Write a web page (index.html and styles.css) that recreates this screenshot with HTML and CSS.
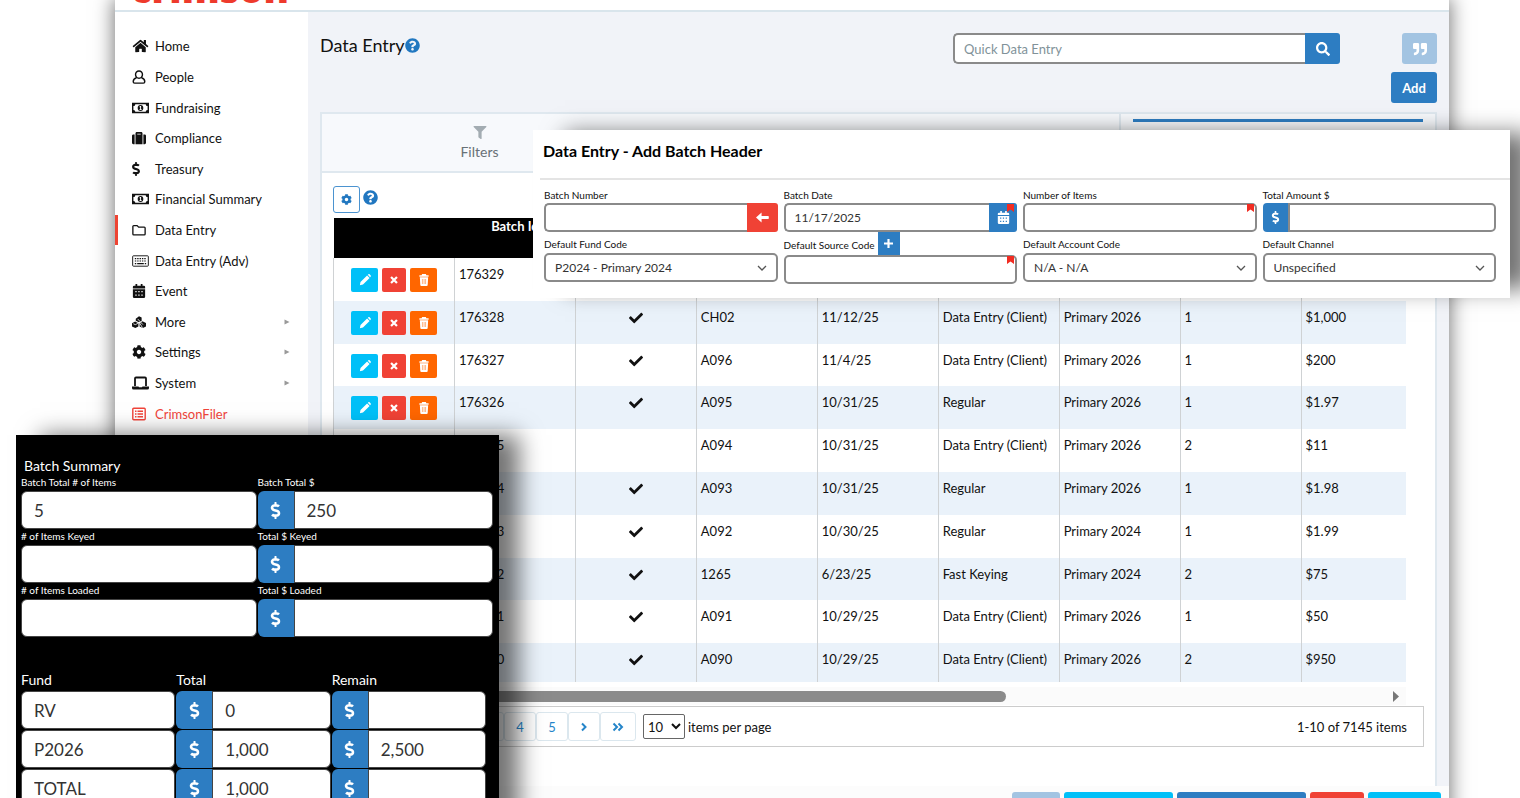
FILE: index.html
```
<!DOCTYPE html>
<html lang="en">
<head>
    <meta charset="UTF-8">
    <meta name="viewport" content="width=device-width, initial-scale=1.0">
    <title>Crimson - Data Entry</title>
    <link rel="stylesheet" href="styles.css">
</head>
<body>

    <!-- icons -->
    <svg class="sprite" aria-hidden="true">
        <symbol id="i-home" viewBox="0 0 576 512"><path d="M280.37 148.26L96 300.11V464a16 16 0 0 0 16 16l112.06-.29a16 16 0 0 0 15.92-16V368a16 16 0 0 1 16-16h64a16 16 0 0 1 16 16v95.64a16 16 0 0 0 16 16.05L464 480a16 16 0 0 0 16-16V300L295.67 148.26a12.19 12.19 0 0 0-15.3 0zM571.6 251.47L488 182.56V44.05a12 12 0 0 0-12-12h-56a12 12 0 0 0-12 12v72.61L318.47 43a48 48 0 0 0-61 0L4.34 251.47a12 12 0 0 0-1.6 16.9l25.5 31A12 12 0 0 0 45.15 301l235.22-193.74a12.19 12.19 0 0 1 15.3 0L530.9 301a12 12 0 0 0 16.9-1.6l25.5-31a12 12 0 0 0-1.7-16.93z"/></symbol>
        <symbol id="i-user" viewBox="0 0 14 15"><path fill="none" stroke="currentColor" stroke-width="1.5" d="M7 1a3.700 3.700 0 0 1 3.700 3.900A3.700 3.700 0 0 1 7 8.800a3.700 3.700 0 0 1-3.700-3.900A3.700 3.700 0 0 1 7 1zM4.300 8.300C2 9 .8 10.500.8 12.600c0 1.100.5 1.500 1.500 1.500h9.400c1 0 1.500-.4 1.500-1.500 0-2.100-1.200-3.600-3.500-4.300"/></symbol>
        <symbol id="i-money" viewBox="0 0 18 12"><path fill-rule="evenodd" d="M0 .5h18v11H0zM3.500 2a2 2 0 0 1-2 2v4a2 2 0 0 1 2 2h11a2 2 0 0 1 2-2V4a2 2 0 0 1-2-2z"/><ellipse cx="9" cy="6" rx="3" ry="3.200"/><path fill="#fff" d="M8.600 4h1v3.300h.7V8H7.900v-.7h.7V5.200h-.7v-.6z"/></symbol>
        <symbol id="i-suitcase" viewBox="0 0 512 512"><path d="M128 480h256V80c0-26.500-21.500-48-48-48H176c-26.500 0-48 21.500-48 48v400zm64-384h128v32H192V96zm320 80v256c0 26.500-21.500 48-48 48h-48V128h48c26.500 0 48 21.500 48 48zM96 480H48c-26.500 0-48-21.500-48-48V176c0-26.500 21.500-48 48-48h48v352z"/></symbol>
        <symbol id="i-dollar" viewBox="0 0 288 512"><path d="M209.2 233.4l-108-31.6C88.7 198.2 80 186.5 80 173.5c0-16.3 13.2-29.5 29.5-29.5h66.3c12.2 0 24.2 3.7 34.2 10.5 6.1 4.1 14.3 3.1 19.5-2l34.8-34c7.1-6.9 6.1-18.4-1.8-24.5C238 74.8 207.4 64.1 176 64V16c0-8.8-7.2-16-16-16h-32c-8.8 0-16 7.2-16 16v48h-2.5C45.8 64-5.4 118.7.5 183.6c4.2 46.1 39.4 83.6 83.8 96.6l102.5 30c12.5 3.7 21.2 15.3 21.2 28.3 0 16.3-13.2 29.5-29.5 29.5h-66.3C100 368 88 364.3 78 357.5c-6.1-4.1-14.3-3.1-19.5 2l-34.8 34c-7.1 6.9-6.1 18.4 1.8 24.5 24.5 19.2 55.1 29.9 86.5 30v48c0 8.8 7.2 16 16 16h32c8.8 0 16-7.2 16-16v-48.2c46.6-.9 90.3-28.6 105.7-72.7 21.500-61.600-14.600-124.800-72.500-141.700z"/></symbol>
        <symbol id="i-folder" viewBox="0 0 16 13"><path fill="none" stroke="currentColor" stroke-width="1.500" d="M2 1.500h3.800l1.800 1.800H14a1 1 0 0 1 1 1V11a1 1 0 0 1-1 1H2a1 1 0 0 1-1-1V2.500a1 1 0 0 1 1-1z"/></symbol>
        <symbol id="i-keyboard" viewBox="0 0 18 13"><path fill="none" stroke="currentColor" d="M1.500 1h15a.8.8 0 0 1 .8.8v9.400a.8.8 0 0 1-.8.8h-15a.8.8 0 0 1-.8-.8V1.800A.8.8 0 0 1 1.500 1z"/><path fill="none" stroke="currentColor" stroke-width="1.300" stroke-dasharray="1.500 1" d="M3 4h12.500M3 6.500h12.500"/><path d="M3 8.500h1.500v1.500H3zM5.500 8.500h7V10h-7zM13.500 8.500H15V10h-1.500z"/></symbol>
        <symbol id="i-calendar" viewBox="0 0 14 16"><path fill-rule="evenodd" d="M3 0h2v2h4V0h2v2h1.500A1.500 1.500 0 0 1 14 3.500V5H0V3.500A1.500 1.500 0 0 1 1.500 2H3zM0 6h14v8.500a1.500 1.500 0 0 1-1.500 1.500h-11A1.500 1.500 0 0 1 0 14.500zM2.800 8v1.500h1.500V8zM6.200 8v1.500h1.500V8zM9.700 8v1.500h1.500V8zM2.800 12v1.500h1.500V12zM6.200 12v1.500h1.500V12zM9.700 12v1.500h1.500V12z"/></symbol>
        <symbol id="i-cubes" viewBox="0 0 16 14"><path d="M4.300 3.200L8 .5l3 1.300v4l-3 1.500-3.700-1.600zM0 8.300L3.600 6.500l3.700 1.800v3.900l-3.500 1.600L0 12.200zM8.700 8.300L12 6l4 2v4.200l-3.600 1.600-3.700-1.600z"/><path fill="none" stroke="#fff" stroke-width=".9" d="M6.500 3.500l6 6.500M8 7l4 6.500M1.500 9l2.300 1 3-1.500"/></symbol>
        <symbol id="i-cog" viewBox="0 0 512 512"><path d="M487.4 315.7l-42.6-24.6c4.3-23.2 4.3-47 0-70.2l42.6-24.6c4.9-2.8 7.1-8.6 5.5-14-11.1-35.6-30-67.8-54.7-94.6-3.8-4.1-10-5.1-14.8-2.3L380.8 110c-17.9-15.4-38.5-27.3-60.8-35.1V25.8c0-5.6-3.9-10.5-9.4-11.7-36.7-8.2-74.3-7.8-109.2 0-5.5 1.2-9.4 6.1-9.4 11.7V75c-22.2 7.9-42.8 19.8-60.8 35.1L88.7 85.5c-4.9-2.8-11-1.9-14.8 2.3-24.7 26.7-43.6 58.9-54.7 94.6-1.7 5.4.6 11.2 5.5 14L67.3 221c-4.3 23.2-4.3 47 0 70.2l-42.6 24.6c-4.9 2.8-7.1 8.6-5.5 14 11.1 35.6 30 67.8 54.7 94.6 3.8 4.1 10 5.1 14.8 2.3l42.6-24.6c17.9 15.4 38.5 27.3 60.8 35.1v49.2c0 5.6 3.9 10.5 9.4 11.7 36.7 8.2 74.3 7.8 109.2 0 5.5-1.2 9.4-6.1 9.4-11.7v-49.2c22.2-7.9 42.8-19.8 60.8-35.1l42.6 24.6c4.9 2.8 11 1.9 14.8-2.3 24.7-26.7 43.6-58.9 54.7-94.6 1.5-5.5-.7-11.3-5.6-14.1zM256 336c-44.1 0-80-35.900-80-80s35.900-80 80-80 80 35.900 80 80-35.900 80-80 80z"/></symbol>
        <symbol id="i-laptop" viewBox="0 0 17 14"><path fill="none" stroke="currentColor" stroke-width="1.800" d="M3 10V2.500a1 1 0 0 1 1-1h9a1 1 0 0 1 1 1V10"/><path d="M0 10.500h6.500l.5.700h3l.5-.7H17v1.500a1.500 1.500 0 0 1-1.500 1.500h-14A1.500 1.500 0 0 1 0 12z"/></symbol>
        <symbol id="i-list" viewBox="0 0 14 13"><path fill="none" stroke="currentColor" stroke-width="1.400" d="M1.700.8h10.600a.9.900 0 0 1 .9.900v9.600a.9.900 0 0 1-.9.900H1.700a.9.900 0 0 1-.9-.9V1.700a.9.900 0 0 1 .9-.9z"/><path d="M3 3h1.500v1.500H3zM5.500 3H11v1.500H5.500zM3 5.700h1.500v1.500H3zM5.500 5.700H11v1.500H5.500zM3 8.500h1.500V10H3zM5.500 8.500H11V10H5.500z"/></symbol>
        <symbol id="i-caret" viewBox="0 0 6 6"><path d="M.5.500L5.500 3l-5 2.500z"/></symbol>
        <symbol id="i-scroll" viewBox="0 0 6 11"><path d="M0 0l6 5.500L0 11z"/></symbol>
        <symbol id="i-help" viewBox="0 0 512 512"><path d="M504 256c0 136.997-111.043 248-248 248S8 392.997 8 256C8 119.083 119.043 8 256 8s248 111.083 248 248zM262.655 90c-54.497 0-89.255 22.957-116.549 63.758-3.536 5.286-2.353 12.415 2.715 16.258l34.699 26.31c5.205 3.947 12.621 3.008 16.665-2.122 17.864-22.658 30.113-35.797 57.303-35.797 20.429 0 45.698 13.148 45.698 32.958 0 14.976-12.363 22.667-32.534 33.976C247.128 238.528 216 254.941 216 296v4c0 6.627 5.373 12 12 12h56c6.627 0 12-5.373 12-12v-1.333c0-28.462 83.186-29.647 83.186-106.667 0-58.002-60.165-102-116.531-102zM256 338c-25.365 0-46 20.635-46 46 0 25.364 20.635 46 46 46s46-20.636 46-46c0-25.365-20.635-46-46-46z"/></symbol>
        <symbol id="i-search" viewBox="0 0 512 512"><path d="M505 442.700L405.300 343c-4.500-4.500-10.600-7-17-7H372c27.600-35.300 44-79.700 44-128C416 93.100 322.900 0 208 0S0 93.100 0 208s93.100 208 208 208c48.300 0 92.700-16.400 128-44v16.300c0 6.400 2.500 12.500 7 17l99.700 99.700c9.400 9.400 24.600 9.400 33.900 0l28.300-28.300c9.400-9.400 9.400-24.600.1-34zM208 336c-70.700 0-128-57.200-128-128 0-70.700 57.200-128 128-128 70.700 0 128 57.200 128 128 0 70.700-57.200 128-128 128z"/></symbol>
        <symbol id="i-quote" viewBox="0 0 512 512"><path d="M464 32H336c-26.500 0-48 21.500-48 48v128c0 26.500 21.500 48 48 48h80v64c0 35.300-28.700 64-64 64h-8c-13.300 0-24 10.700-24 24v48c0 13.300 10.700 24 24 24h8c88.400 0 160-71.600 160-160V80c0-26.500-21.500-48-48-48zm-288 0H48C21.500 32 0 53.500 0 80v128c0 26.500 21.500 48 48 48h80v64c0 35.300-28.700 64-64 64h-8c-13.300 0-24 10.700-24 24v48c0 13.300 10.700 24 24 24h8c88.400 0 160-71.600 160-160V80c0-26.500-21.500-48-48-48z"/></symbol>
        <symbol id="i-filter" viewBox="0 0 512 512"><path d="M487.976 0H24.028C2.710 0-8.047 25.866 7.058 40.971L192 225.941V432c0 7.831 3.821 15.170 10.237 19.662l80 55.980C298.020 518.690 320 507.493 320 487.980V225.941l184.947-184.970C520.021 25.896 509.338 0 487.976 0z"/></symbol>
        <symbol id="i-check" viewBox="0 0 512 512"><path d="M173.898 439.404l-166.400-166.400c-9.997-9.997-9.997-26.206 0-36.204l36.203-36.204c9.997-9.998 26.207-9.998 36.204 0L192 312.690 432.095 72.596c9.997-9.997 26.207-9.997 36.204 0l36.203 36.204c9.997 9.997 9.997 26.206 0 36.204l-294.400 294.401c-9.998 9.997-26.207 9.997-36.204-.001z"/></symbol>
        <symbol id="i-pencil" viewBox="0 0 12 12"><path d="M8.100 1.400l2.500 2.500-6.600 6.700-3.100.6.600-3.100zM8.800.8l.6-.5a.9.900 0 0 1 1.200 0l1.100 1.100a.9.900 0 0 1 0 1.200l-.6.600z"/></symbol>
        <symbol id="i-times" viewBox="0 0 10 10"><path fill="none" stroke="currentColor" stroke-width="2.800" d="M1.300 1.300l7.400 7.400M8.700 1.300L1.300 8.700"/></symbol>
        <symbol id="i-trash" viewBox="0 0 12 13"><path fill-rule="evenodd" d="M4 0h4l.6 1.300H11V3H1V1.300h2.400zM1.500 3.500h9l-.5 8.300a1.200 1.200 0 0 1-1.200 1.200H3.200A1.200 1.200 0 0 1 2 11.800zM3.800 5.300v5.500h.5V5.300zM5.800 5.300v5.500h.5V5.300zM7.700 5.300v5.500h.5V5.300z"/></symbol>
        <symbol id="i-arrow" viewBox="0 0 14 12"><path d="M0 6l6-5.500V4.500h7a.8.800 0 0 1 .8.800v1.400a.8.800 0 0 1-.8.800H6v4z"/></symbol>
        <symbol id="i-plus" viewBox="0 0 10 10"><path d="M3.800 0h2.400v3.800H10v2.400H6.200V10H3.800V6.200H0V3.800h3.800z"/></symbol>
        <symbol id="i-flag" viewBox="0 0 7 8"><path d="M0 0h7v8L3.500 5.500 0 8z"/></symbol>
        <symbol id="i-next" viewBox="0 0 8 10"><path fill="none" stroke="currentColor" stroke-width="2" d="M2 1.500L5.500 5 2 8.500"/></symbol>
        <symbol id="i-last" viewBox="0 0 12 10"><path fill="none" stroke="currentColor" stroke-width="2" d="M1.500 1.500L5 5 1.500 8.500M6.500 1.500L10 5l-3.500 3.500"/></symbol>
    </svg>

    <div class="app">
        <header class="topbar">
            <a class="logo" href="#home">crimson</a>
        </header>

        <div class="layout">
            <nav class="sidebar">
                <a href="#home"><svg class="nav-icon wide"><use href="#i-home"/></svg>Home</a>
                <a href="#people"><svg class="nav-icon"><use href="#i-user"/></svg>People</a>
                <a href="#fundraising"><svg class="nav-icon wide"><use href="#i-money"/></svg>Fundraising</a>
                <a href="#compliance"><svg class="nav-icon"><use href="#i-suitcase"/></svg>Compliance</a>
                <a href="#treasury"><svg class="nav-icon narrow"><use href="#i-dollar"/></svg>Treasury</a>
                <a href="#summary"><svg class="nav-icon wide"><use href="#i-money"/></svg>Financial Summary</a>
                <a href="#entry" class="active"><svg class="nav-icon"><use href="#i-folder"/></svg>Data Entry</a>
                <a href="#entry-adv"><svg class="nav-icon wide"><use href="#i-keyboard"/></svg>Data Entry (Adv)</a>
                <a href="#event"><svg class="nav-icon"><use href="#i-calendar"/></svg>Event</a>
                <a href="#more"><svg class="nav-icon"><use href="#i-cubes"/></svg>More<svg class="nav-caret"><use href="#i-caret"/></svg></a>
                <a href="#settings"><svg class="nav-icon"><use href="#i-cog"/></svg>Settings<svg class="nav-caret"><use href="#i-caret"/></svg></a>
                <a href="#system"><svg class="nav-icon wide"><use href="#i-laptop"/></svg>System<svg class="nav-caret"><use href="#i-caret"/></svg></a>
                <a href="#filer" class="filer"><svg class="nav-icon"><use href="#i-list"/></svg>CrimsonFiler</a>
            </nav>

            <main class="main">
                <div class="page-head">
                    <h1>Data Entry<svg class="help"><use href="#i-help"/></svg></h1>
                    <form class="search">
                        <input type="text" placeholder="Quick Data Entry" aria-label="Quick Data Entry">
                        <button type="button" aria-label="Search"><svg><use href="#i-search"/></svg></button>
                    </form>
                    <div class="head-buttons">
                        <button type="button" class="btn btn-quote" aria-label="Notes"><svg><use href="#i-quote"/></svg></button>
                        <button type="button" class="btn">Add</button>
                    </div>
                </div>

                <section class="panel">
                    <div class="tabs">
                        <div class="tab-left">
                            <button type="button" class="filters"><svg><use href="#i-filter"/></svg>Filters</button>
                        </div>
                        <div class="tab-right"></div>
                    </div>

                    <div class="panel-body">
                        <div class="tools">
                            <button type="button" class="gear" aria-label="Grid settings"><svg><use href="#i-cog"/></svg></button>
                            <svg class="help"><use href="#i-help"/></svg>
                        </div>

                        <div class="grid-wrap">
                            <table class="grid">
                                <thead>
                                    <tr><th></th><th>Batch Id</th><th></th><th></th><th></th><th></th><th></th><th></th><th></th></tr>
                                </thead>
                                <tbody id="rows"></tbody>
                            </table>
                        </div>
                        <div class="scrollbar"><div class="thumb"></div><svg><use href="#i-scroll"/></svg></div>

                        <div class="pager">
                            <button type="button" class="wide" aria-label="First"><svg class="flip"><use href="#i-last"/></svg></button>
                            <button type="button" aria-label="Previous"><svg class="flip"><use href="#i-next"/></svg></button>
                            <button type="button">1</button>
                            <button type="button">2</button>
                            <button type="button">3</button>
                            <button type="button">4</button>
                            <button type="button">5</button>
                            <button type="button" aria-label="Next"><svg><use href="#i-next"/></svg></button>
                            <button type="button" class="wide" aria-label="Last"><svg><use href="#i-last"/></svg></button>
                            <select id="pageSize"><option>10</option><option>20</option><option>50</option></select>
                            <label for="pageSize">items per page</label>
                            <span class="count">1-10 of 7145 items</span>
                        </div>
                    </div>
                </section>
            </main>
        </div>

        <footer class="actions">
            <button type="button" class="a-light" aria-label="Notes"></button>
            <button type="button" class="a-cyan a-mid" aria-label="Export"></button>
            <button type="button" class="a-blue" aria-label="Add batch"></button>
            <button type="button" class="a-red" aria-label="Close"></button>
            <button type="button" class="a-cyan" aria-label="Save"></button>
        </footer>
    </div>

    <!-- add batch header -->
    <form class="batch-header">
        <h2>Data Entry - Add Batch Header</h2>
        <div class="fields">
            <div class="field">
                <label for="batchNumber">Batch Number</label>
                <div class="group">
                    <input type="text" id="batchNumber">
                    <button type="button" class="addon red" aria-label="Next number"><svg><use href="#i-arrow"/></svg></button>
                </div>
            </div>
            <div class="field">
                <label for="batchDate">Batch Date</label>
                <div class="group">
                    <input type="text" id="batchDate" value="11/17/2025">
                    <button type="button" class="addon" aria-label="Pick date"><svg><use href="#i-calendar"/></svg></button>
                    <svg class="required"><use href="#i-flag"/></svg>
                </div>
            </div>
            <div class="field">
                <label for="itemCount">Number of Items</label>
                <div class="group">
                    <input type="text" id="itemCount">
                    <svg class="required"><use href="#i-flag"/></svg>
                </div>
            </div>
            <div class="field">
                <label for="totalAmount">Total Amount $</label>
                <div class="group">
                    <span class="addon left"><svg><use href="#i-dollar"/></svg></span>
                    <input type="text" id="totalAmount">
                </div>
            </div>
            <div class="field second">
                <label for="fundCode">Default Fund Code</label>
                <select id="fundCode"><option>P2024 - Primary 2024</option></select>
            </div>
            <div class="field second">
                <div class="label-row">
                    <label for="sourceCode">Default Source Code</label>
                    <button type="button" aria-label="Add source code"><svg><use href="#i-plus"/></svg></button>
                </div>
                <div class="group">
                    <input type="text" id="sourceCode">
                    <svg class="required"><use href="#i-flag"/></svg>
                </div>
            </div>
            <div class="field second">
                <label for="accountCode">Default Account Code</label>
                <select id="accountCode"><option>N/A - N/A</option></select>
            </div>
            <div class="field second">
                <label for="channel">Default Channel</label>
                <select id="channel"><option>Unspecified</option></select>
            </div>
        </div>
    </form>

    <!-- batch summary -->
    <form class="summary">
        <h2>Batch Summary</h2>
        <div class="totals">
            <div><label for="sItems">Batch Total # of Items</label><input type="text" id="sItems" value="5"></div>
            <div><label for="sTotal">Batch Total $</label><div class="group"><span class="addon"><svg><use href="#i-dollar"/></svg></span><input type="text" id="sTotal" value="250"></div></div>
            <div><label for="sKeyed"># of Items Keyed</label><input type="text" id="sKeyed"></div>
            <div><label for="sKeyedTotal">Total $ Keyed</label><div class="group"><span class="addon"><svg><use href="#i-dollar"/></svg></span><input type="text" id="sKeyedTotal"></div></div>
            <div><label for="sLoaded"># of Items Loaded</label><input type="text" id="sLoaded"></div>
            <div><label for="sLoadedTotal">Total $ Loaded</label><div class="group"><span class="addon"><svg><use href="#i-dollar"/></svg></span><input type="text" id="sLoadedTotal"></div></div>
        </div>
        <div class="funds">
            <span id="hFund">Fund</span><span id="hTotal">Total</span><span id="hRemain">Remain</span>
            <input type="text" value="RV" aria-labelledby="hFund">
            <div class="group"><span class="addon"><svg><use href="#i-dollar"/></svg></span><input type="text" value="0" aria-labelledby="hTotal"></div>
            <div class="group"><span class="addon"><svg><use href="#i-dollar"/></svg></span><input type="text" aria-labelledby="hRemain"></div>
            <input type="text" value="P2026" aria-labelledby="hFund">
            <div class="group"><span class="addon"><svg><use href="#i-dollar"/></svg></span><input type="text" value="1,000" aria-labelledby="hTotal"></div>
            <div class="group"><span class="addon"><svg><use href="#i-dollar"/></svg></span><input type="text" value="2,500" aria-labelledby="hRemain"></div>
            <input type="text" value="TOTAL" aria-labelledby="hFund">
            <div class="group"><span class="addon"><svg><use href="#i-dollar"/></svg></span><input type="text" value="1,000" aria-labelledby="hTotal"></div>
            <div class="group"><span class="addon"><svg><use href="#i-dollar"/></svg></span><input type="text" aria-labelledby="hRemain"></div>
        </div>
    </form>

    <script>
        // id, checked, batch number, date, type, fund, items, total
        const batches = [
            ['176329', true, 'CH03', '11/13/25', 'Data Entry (Client)', 'Primary 2026', '1', '$500'],
            ['176328', true, 'CH02', '11/12/25', 'Data Entry (Client)', 'Primary 2026', '1', '$1,000'],
            ['176327', true, 'A096', '11/4/25', 'Data Entry (Client)', 'Primary 2026', '1', '$200'],
            ['176326', true, 'A095', '10/31/25', 'Regular', 'Primary 2026', '1', '$1.97'],
            ['176325', false, 'A094', '10/31/25', 'Data Entry (Client)', 'Primary 2026', '2', '$11'],
            ['176324', true, 'A093', '10/31/25', 'Regular', 'Primary 2026', '1', '$1.98'],
            ['176323', true, 'A092', '10/30/25', 'Regular', 'Primary 2024', '1', '$1.99'],
            ['176322', true, '1265', '6/23/25', 'Fast Keying', 'Primary 2024', '2', '$75'],
            ['176321', true, 'A091', '10/29/25', 'Data Entry (Client)', 'Primary 2026', '1', '$50'],
            ['176320', true, 'A090', '10/29/25', 'Data Entry (Client)', 'Primary 2026', '2', '$950']
        ];

        const icon = name => `<svg><use href="#i-${name}"/></svg>`;

        document.getElementById('rows').innerHTML = batches.map(b => `
            <tr>
                <td><div class="row-buttons">
                    <button type="button" class="edit" aria-label="Edit">${icon('pencil')}</button>
                    <button type="button" class="remove" aria-label="Remove">${icon('times')}</button>
                    <button type="button" class="trash" aria-label="Delete">${icon('trash')}</button>
                </div></td>
                <td>${b[0]}</td>
                <td class="check">${b[1] ? icon('check') : ''}</td>
                ${b.slice(2).map(v => `<td>${v}</td>`).join('')}
            </tr>`).join('');
    </script>
</body>
</html>
```

FILE: styles.css
```
* {
    box-sizing: border-box;
}
body {
    margin: 0;
    height: 100vh;
    overflow: hidden;
    position: relative;
    font-family: Lato, sans-serif;
    font-size: 13px;
    color: #111;
    background-color: #fff;
}
button, input, select {
    font-family: inherit;
    font-size: 13px;
    margin: 0;
}
button {
    border: none;
    padding: 0;
    cursor: pointer;
}
button, .addon {
    display: flex;
    align-items: center;
    justify-content: center;
}
svg {
    display: block;
    fill: currentColor;
}
.sprite {
    position: absolute;
    width: 0;
    height: 0;
}

/* window */
.app {
    margin: 0 71px 0 115px;
    box-shadow: 0 0 18px 2px rgba(0, 0, 0, 0.5);
    background-color: #fff;
}
.topbar {
    height: 12px;
    border-bottom: 2px solid #d9e5ec;
    padding-left: 16px;
    display: flex;
    align-items: flex-end;
    overflow: hidden;
}
.logo {
    color: #ee3a2c;
    font-family: "Open Sans", sans-serif;
    font-size: 38px;
    font-weight: 800;
    line-height: 44px;
    text-decoration: none;
}
.layout {
    display: flex;
}

/* sidebar */
.sidebar {
    width: 193px;
    height: 417px;
    padding: 19px 0 0;
    display: grid;
    grid-auto-rows: 1fr;
}
.sidebar a {
    display: flex;
    align-items: center;
    color: #111;
    text-decoration: none;
    padding: 0 18px 0 14px;
    border-left: 3px solid transparent;
}
.sidebar a.active {
    border-left-color: #ee4433;
}
.sidebar a.filer {
    color: #f0443a;
}
.nav-icon {
    width: 14px;
    height: 14px;
    margin-right: 9px;
}
.nav-icon.wide {
    width: 17px;
    margin-right: 6px;
}
.nav-icon.narrow {
    width: 8px;
    margin-right: 15px;
}
.nav-caret {
    width: 6px;
    height: 6px;
    margin-left: auto;
    color: #999;
}

/* main */
.main {
    flex: 1;
    min-width: 0;
    background-color: #f1f3f8;
    padding: 21px 12px 0;
}
.page-head {
    display: flex;
    height: 79px;
}
.page-head h1 {
    display: flex;
    align-items: center;
    height: 24px;
    margin: 0 auto 0 0;
    font-size: 18px;
    font-weight: 400;
}
.help {
    width: 15px;
    height: 15px;
    color: #2177c0;
}
.search {
    display: flex;
    width: 387px;
    height: 31px;
}
.search input {
    flex: 1;
    min-width: 0;
    border: 2px solid #8a8a8a;
    border-right: none;
    border-radius: 5px 0 0 5px;
    padding: 0 9px;
}
.search input::placeholder {
    color: #819299;
}
.search button {
    width: 35px;
    color: #fff;
    background-color: #2d7dc2;
    border-radius: 0 3px 3px 0;
}
.search svg {
    width: 14px;
    height: 14px;
}
.head-buttons {
    display: flex;
    flex-direction: column;
    align-items: flex-end;
    gap: 8px;
    width: 97px;
}
.btn {
    width: 46px;
    height: 31px;
    color: #fff;
    font-weight: 700;
    background-color: #2d7dc2;
    border-radius: 3px;
}
.btn-quote {
    width: 35px;
    background-color: #a3c4e2;
}
.btn-quote svg {
    width: 14px;
    height: 14px;
}

/* panel */
.panel {
    height: 674px;
    border: 2px solid #dfe8ef;
    border-bottom: none;
    background-color: #fff;
}
.tabs {
    display: flex;
    height: 59px;
    border-bottom: 2px solid #dfe8ef;
    background-color: #f7f9fc;
}
.tab-left {
    flex: 1;
    border-right: 2px solid #dfe8ef;
}
.filters {
    flex-direction: column;
    gap: 4px;
    width: 315px;
    height: 57px;
    background: none;
    color: #687177;
    font-size: 14px;
}
.filters svg {
    width: 14px;
    height: 13px;
    color: #a3acb2;
}
.tab-right {
    width: 314px;
    padding: 5px 12px;
}
.tab-right::before {
    content: "";
    display: block;
    height: 3px;
    background-color: #2d7dc2;
}
.panel-body {
    padding: 13px 11px 0;
}
.tools {
    display: flex;
    gap: 3px;
    padding-bottom: 5px;
}
.tools .help {
    margin-top: 4px;
}
.gear {
    width: 27px;
    height: 27px;
    color: #2177c0;
    background-color: #fff;
    border: 1px solid #4b93d0;
    border-radius: 3px;
}
.gear svg {
    width: 11px;
    height: 11px;
}

/* table */
.grid-wrap {
    height: 464px;
    overflow: hidden;
    margin-right: 18px;
}
.grid {
    table-layout: fixed;
    width: 1089px;
    height: 468px;
    border-collapse: collapse;
}
.grid th {
    height: 40px;
    padding: 0;
    background-color: #000;
    color: #fff;
    vertical-align: top;
    font-weight: 700;
}
.grid td {
    padding: 8px 0 0 4px;
    border-left: 1px solid #cfd2d4;
    line-height: 17px;
    vertical-align: top;
    white-space: nowrap;
}
.grid tbody tr:nth-child(even) {
    background-color: #eaf2fa;
}
.grid td.check {
    padding-left: 0;
}
.check svg {
    width: 14px;
    height: 14px;
    margin: 2px auto 0;
}
.row-buttons {
    display: flex;
    gap: 4px;
    padding: 2px 0 0 13px;
}
.row-buttons button {
    width: 27px;
    height: 24px;
    color: #fff;
    border-radius: 2px;
}
.row-buttons svg {
    width: 12px;
    height: 12px;
}
.row-buttons .edit {
    background-color: #00c0f8;
}
.row-buttons .remove {
    width: 24px;
    background-color: #f04235;
}
.row-buttons .remove svg {
    width: 8px;
}
.row-buttons .trash {
    background-color: #ff6600;
}
.scrollbar {
    display: flex;
    align-items: center;
    height: 18px;
    margin: 5px 18px 1px 0;
    padding: 0 7px 0 18px;
    background-color: #fbfbfb;
}
.thumb {
    width: 655px;
    height: 11px;
    background-color: #8b8b8b;
    border-radius: 6px;
}
.scrollbar svg {
    width: 6px;
    height: 11px;
    margin-left: auto;
    color: #777;
}
.pager {
    display: flex;
    align-items: center;
    height: 41px;
    padding: 0 16px 0 6px;
    border: 1px solid #ccc;
    background-color: #fff;
}
.pager button {
    width: 32px;
    height: 29px;
    border: 1px solid #dbe7ee;
    border-radius: 3px;
    background-color: #fff;
    color: #2585c9;
}
.pager button.wide {
    width: 36px;
}
.pager svg {
    width: 12px;
    height: 10px;
}
.pager .flip {
    transform: scaleX(-1);
}
.pager select {
    width: 42px;
    height: 25px;
    margin: 0 3px 0 7px;
    border: 1px solid #666;
    border-radius: 2px;
    background-color: #fff;
    color: #111;
    padding: 0;
}
.count {
    margin-left: auto;
}

/* bottom buttons */
.actions {
    display: flex;
    justify-content: flex-end;
    gap: 4px;
    padding: 6px 8px;
    background-color: #fcfcfc;
}
.actions button {
    height: 31px;
    width: 73px;
    border-radius: 3px;
}
.actions .a-light {
    width: 48px;
    background-color: #a3c4e2;
}
.actions .a-cyan {
    background-color: #00c0f8;
}
.actions .a-mid {
    width: 109px;
}
.actions .a-blue {
    width: 129px;
    background-color: #2d7dc2;
}
.actions .a-red {
    width: 54px;
    background-color: #f04235;
}

/* add batch header window */
.batch-header {
    position: absolute;
    top: 130px;
    left: 533px;
    right: 10px;
    padding-bottom: 14px;
    background-color: #fff;
    box-shadow: 26px -3px 22px -6px rgba(0, 0, 0, 0.55);
}
.batch-header h2 {
    margin: 0 0 0 7px;
    padding-left: 3px;
    height: 50px;
    line-height: 42px;
    font-size: 16px;
    font-weight: 700;
    color: #000;
    border-bottom: 2px solid #e4e4e4;
}
.fields {
    display: grid;
    grid-template-columns: repeat(4, 1fr);
    column-gap: 6px;
    padding: 7px 14px 0 11px;
}
.field label {
    display: block;
    height: 16px;
    line-height: 16px;
    font-size: 10px;
}
.field.second label {
    height: 21px;
    line-height: 24px;
}
.group {
    display: flex;
    position: relative;
}
.group input {
    flex: 1;
    min-width: 0;
}
.field input, .field select {
    width: 100%;
    height: 29px;
    padding: 0 9px;
    border: 2px solid #8a8a8a;
    border-radius: 5px;
    background-color: #fff;
    color: #333;
    font-size: 12px;
}
.field select {
    appearance: none;
    background: url("data:image/svg+xml,%3Csvg xmlns='http://www.w3.org/2000/svg' viewBox='0 0 10 6'%3E%3Cpath d='M1 1l4 4 4-4' fill='none' stroke='%23555' stroke-width='1.3'/%3E%3C/svg%3E") no-repeat right 9px center / 10px 6px #fff;
}
.addon {
    width: 28px;
    color: #fff;
    background-color: #2d7dc2;
    border-radius: 0 3px 3px 0;
}
.addon svg {
    width: 13px;
    height: 13px;
}
.addon.red {
    width: 31px;
    background-color: #f04235;
}
.addon.left {
    width: 25px;
    border-radius: 4px 0 0 4px;
}
.group input:has(+ .addon) {
    border-right: none;
    border-radius: 5px 0 0 5px;
}
.addon + input {
    border-radius: 0 5px 5px 0;
}
.required {
    position: absolute;
    top: 1px;
    right: 3px;
    width: 7px;
    height: 8px;
    color: #f12c22;
}
.label-row {
    display: flex;
    align-items: center;
    gap: 3px;
    height: 23px;
}
.label-row button {
    width: 22px;
    height: 23px;
    color: #fff;
    background-color: #2d7dc2;
}
.label-row svg {
    width: 9px;
    height: 9px;
}

/* batch summary window */
.summary {
    position: absolute;
    top: 435px;
    left: 16px;
    width: 483px;
    height: 400px;
    padding: 21px 6px 0 5px;
    background-color: #000;
    color: #fff;
    box-shadow: 22px -2px 22px -2px rgba(0, 0, 0, 0.55);
}
.summary h2 {
    margin: 0 0 0 3px;
    font-size: 14px;
    line-height: 19px;
    font-weight: 400;
}
.totals {
    display: grid;
    grid-template-columns: 1fr 1fr;
    column-gap: 1px;
}
.totals label {
    display: block;
    height: 16px;
    line-height: 15px;
    font-size: 10px;
}
.summary input {
    width: 100%;
    height: 38px;
    padding: 0 12px;
    border: 1px solid #444;
    border-radius: 6px;
    background-color: #fff;
    color: #333;
    font-size: 17px;
}
.summary .group input {
    border-radius: 0 6px 6px 0;
}
.summary .addon {
    width: 36px;
    border-radius: 6px 0 0 6px;
}
.summary .addon svg {
    width: 17px;
    height: 17px;
}
.funds {
    display: grid;
    grid-template-columns: repeat(3, 1fr);
    gap: 1px;
    padding: 34px 7px 0 0;
    font-size: 14px;
}
.funds span[id] {
    height: 19px;
    line-height: 17px;
}
```
